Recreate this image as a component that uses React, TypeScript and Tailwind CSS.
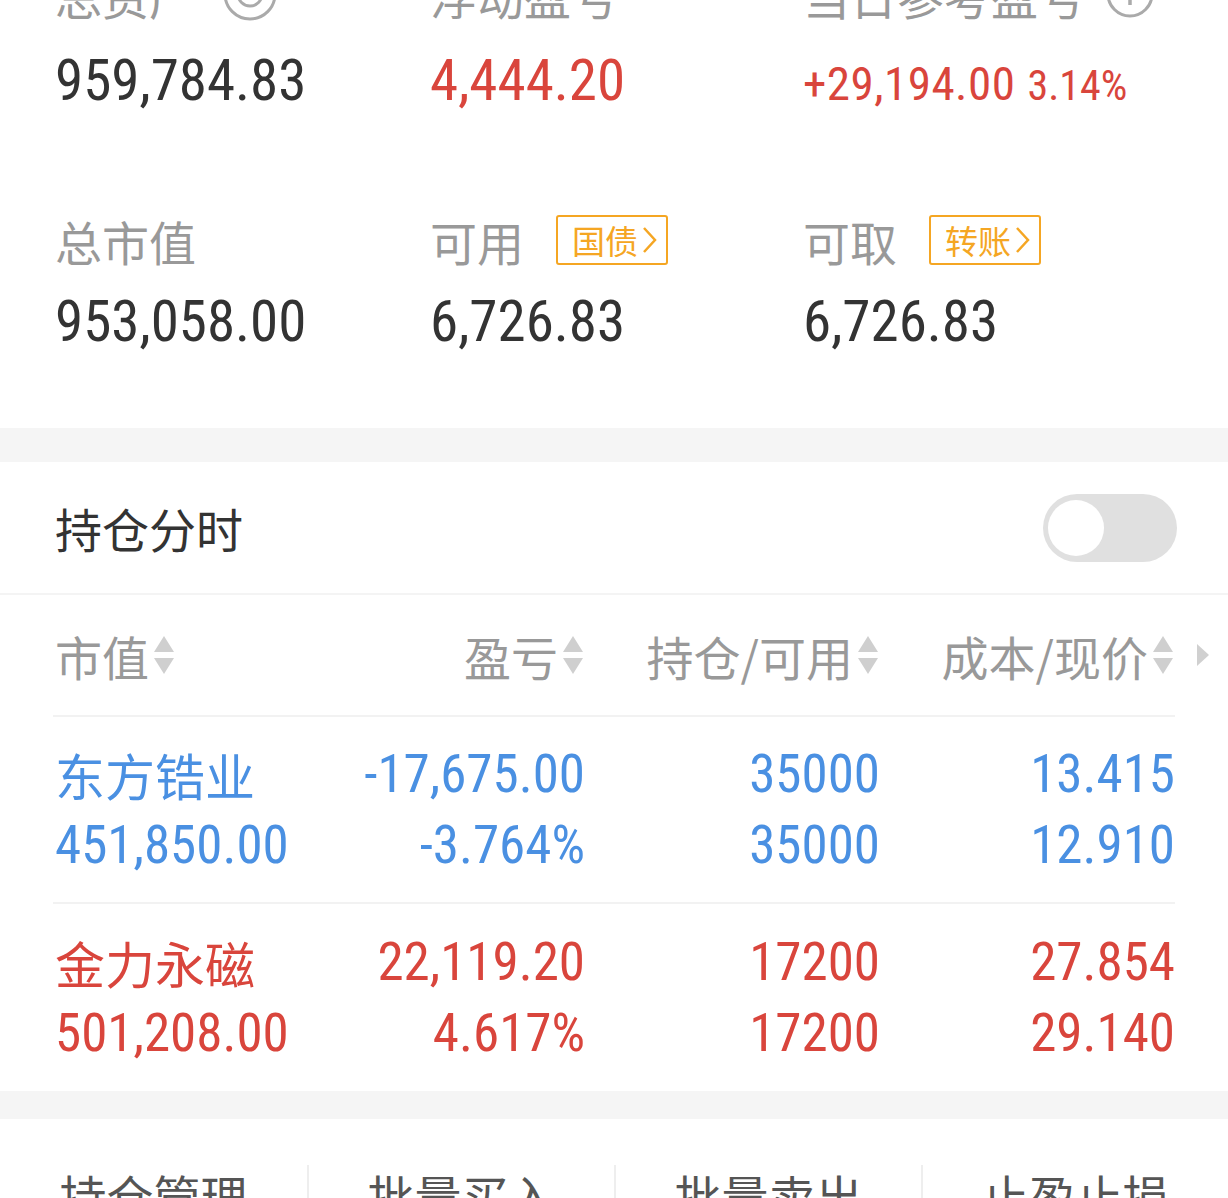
import React from "react";

const NUM = "font-['Liberation_Sans_Narrow','Roboto_Condensed','DejaVu_Sans_Condensed',sans-serif]";
const CJK = "font-['Noto_Sans_CJK_SC','Noto_Sans',sans-serif]";

const SortIcon: React.FC = () => (
  <svg width="24" height="42" viewBox="0 0 24 42" className="ml-[3px]">
    <path d="M12 2 L22 18 L2 18 Z" fill="#cfcfcf" />
    <path d="M2 24 L22 24 L12 40 Z" fill="#cfcfcf" />
  </svg>
);

const Badge: React.FC<{ text: string }> = ({ text }) => (
  <span className={`ml-[32px] inline-flex items-center h-[50px] pl-[14px] pr-[8px] border-2 border-[#f5a623] rounded-[3px] text-[#f5a623] text-[33px] leading-none ${CJK}`}>
    {text}
    <svg width="18" height="30" viewBox="0 0 18 30" className="ml-[2px]">
      <path d="M4 3 L15 15 L4 27" stroke="#f5a623" strokeWidth="2.5" fill="none" />
    </svg>
  </span>
);

interface Holding {
  name: string;
  value: string;
  pl: string;
  plPct: string;
  qty: string;
  avail: string;
  cost: string;
  price: string;
  color: string;
}

const holdings: Holding[] = [
  { name: "东方锆业", value: "451,850.00", pl: "-17,675.00", plPct: "-3.764%", qty: "35000", avail: "35000", cost: "13.415", price: "12.910", color: "text-[#4a90e2]" },
  { name: "金力永磁", value: "501,208.00", pl: "22,119.20", plPct: "4.617%", qty: "17200", avail: "17200", cost: "27.854", price: "29.140", color: "text-[#d9453c]" },
];

const HoldingRow: React.FC<{ h: Holding; last?: boolean }> = ({ h, last }) => (
  <div className={`mx-[53px] flex h-[187px] items-center ${last ? "" : "border-b-2 border-[#f2f2f2]"} ${h.color}`}>
    <div className="w-[250px] flex flex-col gap-[17px] pl-[2px]">
      <div className={`text-[50px] leading-[54px] ${CJK}`}>{h.name}</div>
      <div className={`text-[53px] leading-[54px] ${NUM}`}>{h.value}</div>
    </div>
    <div className={`w-[282px] flex flex-col gap-[17px] items-end text-[53px] leading-[54px] ${NUM}`}>
      <div>{h.pl}</div>
      <div>{h.plPct}</div>
    </div>
    <div className={`w-[295px] flex flex-col gap-[17px] items-end text-[53px] leading-[54px] ${NUM}`}>
      <div>{h.qty}</div>
      <div>{h.avail}</div>
    </div>
    <div className={`w-[295px] flex flex-col gap-[17px] items-end text-[53px] leading-[54px] ${NUM}`}>
      <div>{h.cost}</div>
      <div>{h.price}</div>
    </div>
  </div>
);

const Label: React.FC<{ children: React.ReactNode }> = ({ children }) => (
  <span className={`text-[47px] text-[#999] leading-none ${CJK}`}>{children}</span>
);

export default function App() {
  return (
    <div className="w-[1228px] h-[1198px] overflow-hidden bg-white">
      {/* asset summary */}
      <div className="pl-[55px] h-[428px] flex flex-col">
        <div className="grid grid-cols-[375px_373px_1fr] mt-[-31px]">
          <div className="flex items-center h-[50px]">
            <Label>总资产</Label>
            <svg width="56" height="56" viewBox="0 0 56 56" className="ml-[26px]">
              <circle cx="28" cy="28" r="25" stroke="#aaa" strokeWidth="3" fill="none" />
              <circle cx="28" cy="28" r="12" stroke="#aaa" strokeWidth="3" fill="none" />
            </svg>
          </div>
          <div className="flex items-center h-[50px]">
            <Label>浮动盈亏</Label>
          </div>
          <div className="flex items-center h-[50px]">
            <Label>当日参考盈亏</Label>
            <svg width="50" height="50" viewBox="0 0 50 50" className="ml-[20px]">
              <circle cx="25" cy="25" r="22" stroke="#aaa" strokeWidth="3" fill="none" />
              <line x1="25" y1="20" x2="25" y2="36" stroke="#aaa" strokeWidth="3.5" />
              <circle cx="25" cy="13" r="2.5" fill="#aaa" />
            </svg>
          </div>
        </div>
        <div className={`grid grid-cols-[375px_373px_1fr] mt-[30px] h-[64px] items-baseline leading-[64px] ${NUM}`}>
          <div className="text-[57px] text-[#333]">959,784.83</div>
          <div className="text-[57px] text-[#d9453c]">4,444.20</div>
          <div className="text-[#d9453c]">
            <span className="text-[47px] tracking-[0.5px]">+29,194.00</span>
            <span className="text-[42px] ml-[12px]">3.14%</span>
          </div>
        </div>

        <div className="grid grid-cols-[375px_373px_1fr] mt-[102px]">
          <div className="flex items-center h-[50px]">
            <Label>总市值</Label>
          </div>
          <div className="flex items-center h-[50px]">
            <Label>可用</Label>
            <Badge text="国债" />
          </div>
          <div className="flex items-center h-[50px]">
            <Label>可取</Label>
            <Badge text="转账" />
          </div>
        </div>
        <div className={`grid grid-cols-[375px_373px_1fr] mt-[25px] h-[64px] leading-[64px] text-[57px] text-[#333] ${NUM}`}>
          <div>953,058.00</div>
          <div>6,726.83</div>
          <div>6,726.83</div>
        </div>
      </div>

      <div className="h-[34px] bg-[#f5f5f5]" />

      {/* position timeshare toggle */}
      <div className="h-[133px] px-[55px] flex items-center justify-between border-b-2 border-[#f4f4f4]">
        <span className={`text-[47px] text-[#333] leading-none ${CJK}`}>持仓分时</span>
        <div className="w-[134px] h-[68px] rounded-full bg-[#e0e0e0] p-[5px] mr-[-4px] flex items-center">
          <div className="w-[56px] h-[56px] rounded-full bg-white" />
        </div>
      </div>

      {/* table header */}
      <div className={`h-[122px] flex items-center text-[47px] text-[#999] leading-none ${CJK}`}>
        <div className="mx-[53px] flex items-center flex-1 border-b-2 border-[#f2f2f2] h-full relative">
          <div className="w-[250px] flex items-center pl-[2px]">市值<SortIcon /></div>
          <div className="w-[282px] flex items-center justify-end">盈亏<SortIcon /></div>
          <div className="w-[295px] flex items-center justify-end">持仓/可用<SortIcon /></div>
          <div className="w-[295px] flex items-center justify-end">成本/现价<SortIcon /></div>
          <svg width="14" height="24" viewBox="0 0 14 24" className="absolute right-[-35px]">
            <path d="M1 1 L13 12 L1 23 Z" fill="#d0d0d0" />
          </svg>
        </div>
      </div>

      {holdings.map((h, i) => (
        <HoldingRow key={h.name} h={h} last={i === holdings.length - 1} />
      ))}

      <div className="h-[28px] bg-[#f5f5f5]" />

      {/* action bar */}
      <div className={`grid grid-cols-4 pt-[46px] text-[47px] text-[#555] leading-none ${CJK}`}>
        {["持仓管理", "批量买入", "批量卖出", "止盈止损"].map((t, i) => (
          <div key={t} className={`flex justify-center h-[60px] pt-[6px] ${i > 0 ? "border-l-2 border-[#eee]" : ""}`}>
            {t}
          </div>
        ))}
      </div>
    </div>
  );
}
